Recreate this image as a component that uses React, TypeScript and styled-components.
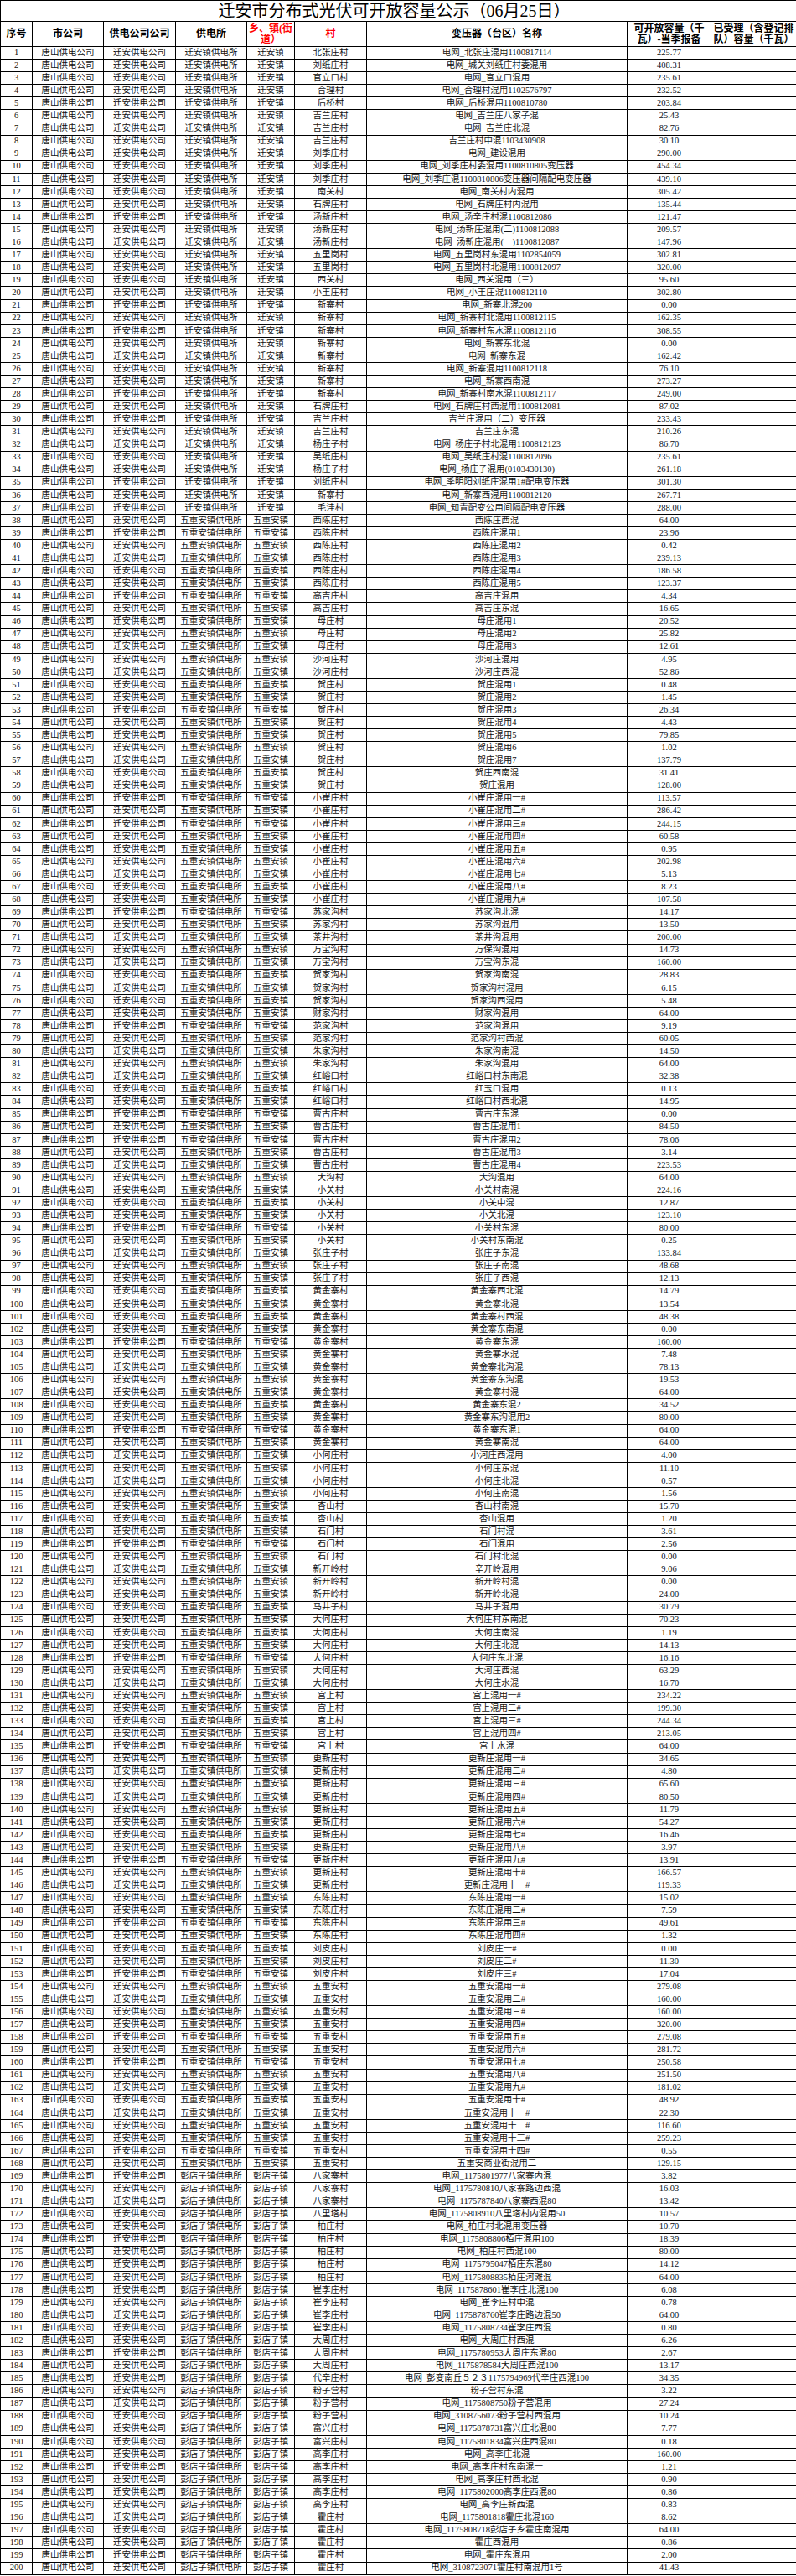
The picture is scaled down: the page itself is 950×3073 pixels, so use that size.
import React from 'react';
import styled, { createGlobalStyle } from 'styled-components';

// 供电所 / 乡镇
const STATIONS = [
  { station: '迁安镇供电所', town: '迁安镇' },
  { station: '五重安镇供电所', town: '五重安镇' },
  { station: '彭店子镇供电所', town: '彭店子镇' },
];

// 村|变压器（台区）名称|可开放容量
const QIANAN = `北张庄村|电网_北张庄混用1100817114|225.77
刘纸庄村|电网_城关刘纸庄村委混用|408.31
官立口村|电网_官立口混用|235.61
合理村|电网_合理村混用1102576797|232.52
后桥村|电网_后桥混用1100810780|203.84
吉兰庄村|电网_吉兰庄八家子混|25.43
吉兰庄村|电网_吉兰庄北混|82.76
吉兰庄村|吉兰庄村中混1103430908|30.10
刘季庄村|电网_建设混用|290.00
刘季庄村|电网_刘季庄村委混用1100810805变压器|454.34
刘季庄村|电网_刘季庄混1100810806变压器间隔配电变压器|439.10
南关村|电网_南关村内混用|305.42
石牌庄村|电网_石牌庄村内混用|135.44
汤新庄村|电网_汤辛庄村混1100812086|121.47
汤新庄村|电网_汤新庄混用(二)1100812088|209.57
汤新庄村|电网_汤新庄混用(一)1100812087|147.96
五里岗村|电网_五里岗村东混用1102854059|302.81
五里岗村|电网_五里岗村北混用1100812097|320.00
西关村|电网_西关混用（三）|95.60
小王庄村|电网_小王庄混1100812110|302.80
新寨村|电网_新寨北混200|0.00
新寨村|电网_新寨村北混用1100812115|162.35
新寨村|电网_新寨村东水混1100812116|308.55
新寨村|电网_新寨东北混|0.00
新寨村|电网_新寨东混|162.42
新寨村|电网_新寨混用1100812118|76.10
新寨村|电网_新寨西南混|273.27
新寨村|电网_新寨村南水混1100812117|249.00
石牌庄村|电网_石牌庄村西混用1100812081|87.02
吉兰庄村|吉兰庄混用（二）变压器|233.43
吉兰庄村|吉兰庄东混|210.26
杨庄子村|电网_杨庄子村北混用1100812123|86.70
吴纸庄村|电网_吴纸庄村混1100812096|235.61
杨庄子村|电网_杨庄子混用(0103430130)|261.18
刘纸庄村|电网_季明阳刘纸庄混用1#配电变压器|301.30
新寨村|电网_新寨西混用1100812120|267.71
毛洼村|电网_知青配变公用间隔配电变压器|288.00`;

const WUCHONGAN = `西陈庄村|西陈庄西混|64.00
西陈庄村|西陈庄混用1|23.96
西陈庄村|西陈庄混用2|0.42
西陈庄村|西陈庄混用3|239.13
西陈庄村|西陈庄混用4|186.58
西陈庄村|西陈庄混用5|123.37
高吉庄村|高吉庄混用|4.34
高吉庄村|高吉庄东混|16.65
母庄村|母庄混用1|20.52
母庄村|母庄混用2|25.82
母庄村|母庄混用3|12.61
沙河庄村|沙河庄混用|4.95
沙河庄村|沙河庄西混|52.86
贺庄村|贺庄混用1|0.48
贺庄村|贺庄混用2|1.45
贺庄村|贺庄混用3|26.34
贺庄村|贺庄混用4|4.43
贺庄村|贺庄混用5|79.85
贺庄村|贺庄混用6|1.02
贺庄村|贺庄混用7|137.79
贺庄村|贺庄西南混|31.41
贺庄村|贺庄混用|128.00
小崔庄村|小崔庄混用一#|113.57
小崔庄村|小崔庄混用二#|286.42
小崔庄村|小崔庄混用三#|244.15
小崔庄村|小崔庄混用四#|60.58
小崔庄村|小崔庄混用五#|0.95
小崔庄村|小崔庄混用六#|202.98
小崔庄村|小崔庄混用七#|5.13
小崔庄村|小崔庄混用八#|8.23
小崔庄村|小崔庄混用九#|107.58
苏家沟村|苏家沟北混|14.17
苏家沟村|苏家沟混用|13.50
茶井沟村|茶井沟混用|200.00
万宝沟村|万保沟混用|14.73
万宝沟村|万宝沟东混|160.00
贺家沟村|贺家沟南混|28.83
贺家沟村|贺家沟村混用|6.15
贺家沟村|贺家沟西混用|5.48
财家沟村|财家沟混用|64.00
范家沟村|范家沟混用|9.19
范家沟村|范家沟村西混|60.05
朱家沟村|朱家沟南混|14.50
朱家沟村|朱家沟混用|64.00
红峪口村|红峪口村东南混|32.38
红峪口村|红玉口混用|0.13
红峪口村|红峪口村西北混|14.95
曹古庄村|曹古庄东混|0.00
曹古庄村|曹古庄混用1|84.50
曹古庄村|曹古庄混用2|78.06
曹古庄村|曹古庄混用3|3.14
曹古庄村|曹古庄混用4|223.53
大沟村|大沟混用|64.00
小关村|小关村南混|224.16
小关村|小关中混|12.87
小关村|小关北混|123.10
小关村|小关村东混|80.00
小关村|小关村东南混|0.25
张庄子村|张庄子东混|133.84
张庄子村|张庄子南混|48.68
张庄子村|张庄子西混|12.13
黄金寨村|黄金寨西北混|14.79
黄金寨村|黄金寨北混|13.54
黄金寨村|黄金寨村西混|48.38
黄金寨村|黄金寨东南混|0.00
黄金寨村|黄金寨东混|160.00
黄金寨村|黄金寨水混|7.48
黄金寨村|黄金寨北沟混|78.13
黄金寨村|黄金寨东沟混|19.53
黄金寨村|黄金寨村混|64.00
黄金寨村|黄金寨东混2|34.52
黄金寨村|黄金寨东沟混用2|80.00
黄金寨村|黄金寨东混1|64.00
黄金寨村|黄金寨南混|64.00
小何庄村|小河庄西混用|4.00
小何庄村|小何庄东混|11.10
小何庄村|小何庄北混|0.57
小何庄村|小何庄南混|1.56
杏山村|杏山村南混|15.70
杏山村|杏山混用|1.20
石门村|石门村混|3.61
石门村|石门混用|2.56
石门村|石门村北混|0.00
新开岭村|辛开岭混用|9.06
新开岭村|新开岭村混|0.00
新开岭村|新开岭北混|24.00
马井子村|马井子混用|30.79
大何庄村|大何庄村东南混|70.23
大何庄村|大何庄南混|1.19
大何庄村|大何庄北混|14.13
大何庄村|大何庄东北混|16.16
大何庄村|大河庄西混|63.29
大何庄村|大何庄水混|16.70
宫上村|宫上混用一#|234.22
宫上村|宫上混用二#|199.30
宫上村|宫上混用三#|244.34
宫上村|宫上混用四#|213.05
宫上村|宫上水混|64.00
更新庄村|更新庄混用一#|34.65
更新庄村|更新庄混用二#|4.80
更新庄村|更新庄混用三#|65.60
更新庄村|更新庄混用四#|80.50
更新庄村|更新庄混用五#|11.79
更新庄村|更新庄混用六#|54.27
更新庄村|更新庄混用七#|16.46
更新庄村|更新庄混用八#|3.97
更新庄村|更新庄混用九#|13.91
更新庄村|更新庄混用十#|166.57
更新庄村|更新庄混用十一#|119.33
东陈庄村|东陈庄混用一#|15.02
东陈庄村|东陈庄混用二#|7.59
东陈庄村|东陈庄混用三#|49.61
东陈庄村|东陈庄混用四#|1.32
刘皮庄村|刘皮庄一#|0.00
刘皮庄村|刘皮庄二#|11.30
刘皮庄村|刘皮庄三#|17.04
五重安村|五重安混用一#|279.08
五重安村|五重安混用二#|160.00
五重安村|五重安混用三#|160.00
五重安村|五重安混用四#|320.00
五重安村|五重安混用五#|279.08
五重安村|五重安混用六#|281.72
五重安村|五重安混用七#|250.58
五重安村|五重安混用八#|251.50
五重安村|五重安混用九#|181.02
五重安村|五重安混用十#|48.92
五重安村|五重安混用十一#|22.30
五重安村|五重安混用十二#|116.60
五重安村|五重安混用十三#|259.23
五重安村|五重安混用十四#|0.55
五重安村|五重安商业街混用二|129.15`;

const PENGDIANZI = `八家寨村|电网_1175801977八家寨内混|3.82
八家寨村|电网_1175780810八家寨路边西混|16.03
八家寨村|电网_1175787840八家寨西混80|13.42
八里塔村|电网_1175808910八里塔村内混用50|10.57
柏庄村|电网_柏庄村北混用变压器|10.70
柏庄村|电网_1175808806栢庄混用100|18.39
柏庄村|电网_柏庄村西混100|80.00
柏庄村|电网_1175795047栢庄东混80|14.12
柏庄村|电网_1175808835栢庄河滩混|64.00
崔李庄村|电网_1175878601崔李庄北混100|6.08
崔李庄村|电网_崔李庄村中混|0.78
崔李庄村|电网_1175878760崔李庄路边混50|64.00
崔李庄村|电网_1175808734崔李庄西混|0.80
大周庄村|电网_大周庄村西混|6.26
大周庄村|电网_1175780953大周庄东混80|2.67
大周庄村|电网_1175878584大周庄西混100|13.17
代辛庄村|电网_彭变南丘５２３1175794969代辛庄西混100|34.35
粉子营村|粉子营村东混|3.22
粉子营村|电网_1175808750粉子营混用|27.24
粉子营村|电网_3108756073粉子营村西混用|10.24
富兴庄村|电网_1175878731富兴庄北混80|7.77
富兴庄村|电网_1175801834富兴庄西混80|0.18
高李庄村|电网_高李庄北混|160.00
高李庄村|电网_高李庄村东南混一|1.21
高李庄村|电网_高李庄村西北混|0.90
高李庄村|电网_1175802000高李庄西混80|0.86
高李庄村|电网_高李庄新西混|0.83
霍庄村|电网_1175801818霍庄北混160|8.62
霍庄村|电网_1175808718彭店子乡霍庄南混用|64.00
霍庄村|霍庄西混用|0.86
霍庄村|电网_霍庄东混用|2.00
霍庄村|电网_3108723071霍庄村南混用1号|41.43`;

const parse = (text: string, stationIndex: number) =>
  text.split('\n').map((line) => {
    const [village, transformer, capacity] = line.split('|');
    return { ...STATIONS[stationIndex], village, transformer, capacity };
  });

const ROWS = [...parse(QIANAN, 0), ...parse(WUCHONGAN, 1), ...parse(PENGDIANZI, 2)];

const HEADERS: { label: React.ReactNode; red?: boolean }[] = [
  { label: '序号' },
  { label: '市公司' },
  { label: '供电公司公司' },
  { label: '供电所' },
  {
    label: (
      <>
        乡、镇(街
        <br />
        道）
      </>
    ),
    red: true,
  },
  { label: '村', red: true },
  { label: '变压器（台区）名称' },
  {
    label: (
      <>
        可开放容量（千
        <br />
        瓦）-当季报备
      </>
    ),
  },
  {
    label: (
      <>
        已受理（含登记排
        <br />
        队）容量（千瓦）
      </>
    ),
  },
];

const App = () => {
  return (
    <>
      <GlobalStyle />
      <Sheet>
        <Title>迁安市分布式光伏可开放容量公示（06月25日）</Title>
        {HEADERS.map((head, i) => (
          <HeadCell key={i} $red={head.red}>
            <span>{head.label}</span>
          </HeadCell>
        ))}
        {ROWS.map((row, i) => (
          <React.Fragment key={i}>
            <Cell>{i + 1}</Cell>
            <Cell>唐山供电公司</Cell>
            <Cell>迁安供电公司</Cell>
            <Cell>{row.station}</Cell>
            <Cell>{row.town}</Cell>
            <Cell>{row.village}</Cell>
            <Cell>{row.transformer}</Cell>
            <Cell>{row.capacity}</Cell>
            <Cell />
          </React.Fragment>
        ))}
      </Sheet>
    </>
  );
};

export default App;

const GlobalStyle = createGlobalStyle`
  html, body {
    margin: 0;
    padding: 0;
    background: #fff;
  }
  body {
    font-family: "Liberation Serif", "Noto Sans CJK SC", serif;
    color: #000;
  }
`;

const Sheet = styled.div`
  display: grid;
  width: 950px;
  box-sizing: border-box;
  grid-template-columns: 38px 85px 86px 85px 57px 86px 311px 100px 102px;
  grid-template-rows: 25px 30px;
  grid-auto-rows: 15.09px;
  border-left: 1px solid #000;
  border-top: 1px solid #000;
  background: #fff;
`;

const Title = styled.div`
  grid-column: 1 / -1;
  display: flex;
  align-items: center;
  justify-content: center;
  padding-right: 10px;
  box-sizing: border-box;
  border-right: 1px solid #000;
  border-bottom: 1px solid #000;
  font-family: "Liberation Serif", "Noto Sans CJK SC", serif;
  font-size: 20px;
  line-height: 1;
  color: #000;
`;

const HeadCell = styled.div<{ $red?: boolean }>`
  display: flex;
  align-items: center;
  justify-content: center;
  box-sizing: border-box;
  border-right: 1px solid #000;
  border-bottom: 1px solid #000;
  overflow: hidden;
  font-family: "Liberation Serif", "Noto Sans CJK SC", serif;
  font-size: 12px;
  font-weight: 700;
  line-height: 13px;
  text-align: center;
  white-space: nowrap;
  color: ${(props) => (props.$red ? '#ff0000' : '#000')};
`;

const Cell = styled.div`
  display: flex;
  align-items: center;
  justify-content: center;
  box-sizing: border-box;
  border-right: 1px solid #000;
  border-bottom: 1px solid #000;
  overflow: hidden;
  font-size: 10.5px;
  line-height: 1;
  white-space: nowrap;
  color: #111;
`;
